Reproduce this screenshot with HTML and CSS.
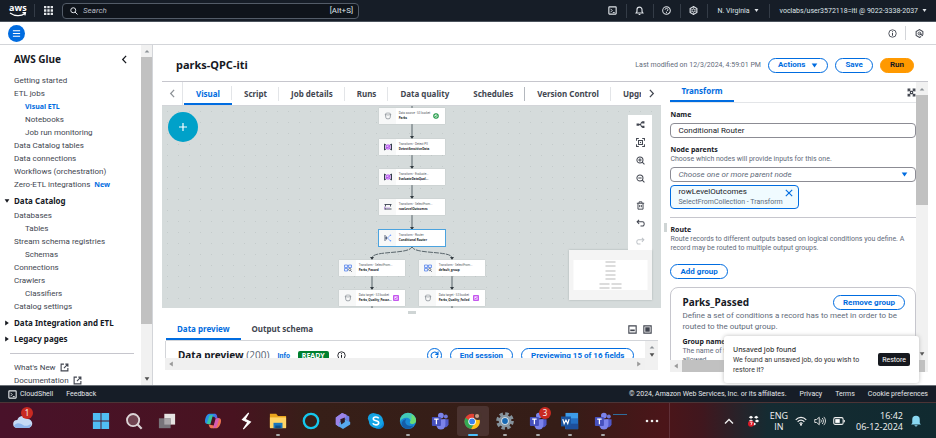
FILE: index.html
```html
<!DOCTYPE html>
<html lang="en">
<head>
<meta charset="utf-8">
<title>parks-QPC-iti - AWS Glue</title>
<link rel="stylesheet" href="styles.css">
</head>
<body>
<svg class="sprite" aria-hidden="true">
  <symbol id="i-teams" viewBox="0 0 20 20"><circle cx="16.5" cy="5" r="2.2" fill="#6f78dc"/><circle cx="11" cy="4" r="3.2" fill="#7b83eb"/><path d="M13 8h6.5v6a4 4 0 0 1-6.500 2z" fill="#5059c9"/><path d="M6 8h10v6.500a5 5 0 0 1-10 0z" fill="#7b83eb"/><rect x="1" y="5.500" width="10" height="10" rx="1" fill="#4650bd"/><path d="M3.500 8h5M6 8v5.500" stroke="#fff" stroke-width="1.400"/></symbol>
  <symbol id="i-ext" viewBox="0 0 16 16"><path d="M7 2H2v12h12V9M9.500 2H14v4.500M14 2 7 9" fill="none" stroke="currentColor" stroke-width="2"/></symbol>
  <symbol id="i-shell" viewBox="0 0 16 16"><rect x="1.500" y="1.500" width="13" height="13" rx="1" fill="none" stroke="currentColor" stroke-width="2"/><path d="m4.500 5 3 3-3 3M8.500 11.500h3.500" fill="none" stroke="currentColor" stroke-width="1.600"/></symbol>
  <symbol id="i-info" viewBox="0 0 16 16"><circle cx="8" cy="8" r="6.600" fill="none" stroke="currentColor" stroke-width="1.600"/><path d="M8 7v5M8 4v1.800" stroke="currentColor" stroke-width="1.800"/></symbol>
  <symbol id="i-left" viewBox="0 0 10 10"><path d="M6.800 1 3 5l3.800 4" fill="none" stroke="currentColor" stroke-width="1.400"/></symbol>
  <symbol id="i-right" viewBox="0 0 10 10"><path d="M3.200 1 7 5 3.200 9" fill="none" stroke="currentColor" stroke-width="1.400"/></symbol>
  <symbol id="i-down" viewBox="0 0 10 10"><path d="M1 2h8L5 8z" fill="currentColor"/></symbol>
  <symbol id="i-up" viewBox="0 0 10 10"><path d="M1 7.500h8l-4-4z" fill="currentColor"/></symbol>
  <symbol id="i-tri" viewBox="0 0 10 10"><path d="M2 1v8l6-4z" fill="currentColor"/></symbol>
  <symbol id="i-search" viewBox="0 0 16 16"><circle cx="6.500" cy="6.500" r="5" fill="none" stroke="currentColor" stroke-width="2"/><path d="m10 10 5 5" stroke="currentColor" stroke-width="2"/></symbol>
  <symbol id="i-bucket" viewBox="0 0 16 16"><ellipse cx="8" cy="4" rx="5.500" ry="2" fill="none" stroke="#687078"/><path d="M2.500 4 4 12.500c1 1.600 7 1.600 8 0L13.500 4" fill="none" stroke="#687078" stroke-width="1.200"/></symbol>
  <symbol id="i-eval" viewBox="0 0 16 16"><path d="M1 2v12M15 2v12M1 2l4 3M15 2l-4 3M1 14l4-3M15 14l-4-3" stroke="#333b4d" stroke-width="2"/><rect x="4" y="4" width="8" height="8" rx="2" fill="#e7b5ff" stroke="#a237e8" stroke-width="1.600"/><path d="m5 8 2 2 4-4" fill="none" stroke="#8118cc" stroke-width="1.400"/></symbol>
  <symbol id="i-collect" viewBox="0 0 16 16"><path d="M1 3h14M3 3v4M13 3v4M2 12h13M2 9v4" fill="none" stroke="#394150" stroke-width="1.800"/><path d="M1 7v6M4 10h8" stroke="#b184df" stroke-width="1.400"/></symbol>
  <symbol id="i-router" viewBox="0 0 16 16"><path d="M2 2v12M2 8h5M5 5v6" fill="none" stroke="#4b5870" stroke-width="1.800"/><path d="M7 8l6-6M7 8l6 6" stroke="#6d9cff" stroke-width="1.600"/><circle cx="13" cy="2.500" r="1.500" fill="#6d9cff"/><circle cx="13" cy="13.500" r="1.500" fill="#6d9cff"/></symbol>
  <symbol id="i-blocks" viewBox="0 0 16 16"><path d="M1 2h6v5H1zM9 2h6v5H9zM1 9h6v5H1z" fill="#e7eeff" stroke="#4778e8" stroke-width="1.400"/><circle cx="11.500" cy="11" r="2.300" fill="none" stroke="#444d60" stroke-width="1.400"/><path d="m13 13 2.500 2.500" stroke="#444d60" stroke-width="1.600"/></symbol>
  <symbol id="i-badge" viewBox="0 0 8 8"><rect x="1" y="1" width="6" height="6" fill="#f8e4ff" stroke="#b52bea" stroke-width="1.400"/><path d="m2.500 4 1.200 1.200 2-2.400" fill="none" stroke="#b52bea"/></symbol>
</svg>

<header class="topbar">
  <a class="aws" href="#" aria-label="AWS home"><span>aws</span><svg viewBox="0 0 18 5"><path d="M1 1c5 3.500 11 3.500 15 .5M13.500.700l3-.2-.6 2.800" fill="none" stroke="#fff" stroke-width="1.200"/></svg></a>
  <button class="apps" aria-label="Services"><svg viewBox="0 0 10 10" fill="#e4e7ea"><path d="M0 0h2.600v2.600H0zM3.700 0h2.600v2.600H3.700zM7.400 0H10v2.600H7.400zM0 3.700h2.600v2.600H0zM3.700 3.700h2.600v2.600H3.700zM7.400 3.700H10v2.600H7.400zM0 7.400h2.600V10H0zM3.700 7.400h2.600V10H3.700zM7.400 7.400H10V10H7.400z"/></svg></button>
  <label class="search"><svg><use href="#i-search"/></svg><input type="search" placeholder="Search" aria-label="Search"><span>[Alt+S]</span></label>
  <nav class="topnav">
    <button aria-label="CloudShell"><svg><use href="#i-shell"/></svg></button>
    <button aria-label="Notifications"><svg viewBox="0 0 16 16"><path d="M2 12.500h12L12.500 10V6.500a4.500 4.500 0 0 0-9 0V10zM6.500 15h3" fill="none" stroke="currentColor" stroke-width="2"/></svg></button>
    <button aria-label="Help"><svg viewBox="0 0 16 16"><circle cx="8" cy="8" r="6.800" fill="none" stroke="currentColor" stroke-width="1.800"/><path d="M5.500 6.500a2.500 2.300 0 1 1 3.300 2.200L8 9.500M8 10.800v1.700" fill="none" stroke="currentColor" stroke-width="1.700"/></svg></button>
    <button aria-label="Settings"><svg viewBox="0 0 16 16"><path d="m8 1 6 3.500v7L8 15l-6-3.500v-7z" fill="none" stroke="currentColor" stroke-width="2"/><circle cx="8" cy="8" r="2.600" fill="none" stroke="currentColor" stroke-width="1.600"/><path d="M8 1v4M8 11v4M2 5l3 1.500M14 5l-3 1.500M2 11l3-1.500M14 11l-3-1.500" stroke="currentColor"/></svg></button>
    <button class="region">N. Virginia <svg><use href="#i-down"/></svg></button>
    <button class="account">voclabs/user3572118=iti @ 9022-3338-2037 <svg><use href="#i-down"/></svg></button>
  </nav>
</header>

<div class="subbar">
  <button class="menu" aria-label="Open navigation"><svg viewBox="0 0 10 10"><path d="M1 2h8M1 5h8M1 8h8" stroke="#fff" stroke-width="1.200"/></svg></button>
  <div class="subtools">
    <button aria-label="Info"><svg><use href="#i-info"/></svg></button>
    <button aria-label="Assistant"><svg viewBox="0 0 16 16"><path d="m14 10V4.500L8 1 2 4.500v7L8 15l3-1.700M8 8l6 4" fill="none" stroke="currentColor" stroke-width="1.800"/><circle cx="8" cy="8" r="2.500" fill="none" stroke="currentColor" stroke-width="1.600"/></svg></button>
  </div>
</div>

<div class="shell">
  <aside class="side">
    <div class="sidebody">
      <div class="sidehead"><h2>AWS Glue</h2><button aria-label="Close navigation"><svg><use href="#i-left"/></svg></button></div>
      <nav class="links">
        <a href="#">Getting started</a>
        <a href="#">ETL jobs</a>
        <a href="#" class="sub current">Visual ETL</a>
        <a href="#" class="sub">Notebooks</a>
        <a href="#" class="sub">Job run monitoring</a>
        <a href="#">Data Catalog tables</a>
        <a href="#">Data connections</a>
        <a href="#">Workflows (orchestration)</a>
        <a href="#">Zero-ETL integrations <b>New</b></a>
        <button class="group"><svg><use href="#i-down"/></svg>Data Catalog</button>
        <a href="#">Databases</a>
        <a href="#" class="sub">Tables</a>
        <a href="#">Stream schema registries</a>
        <a href="#" class="sub">Schemas</a>
        <a href="#">Connections</a>
        <a href="#">Crawlers</a>
        <a href="#" class="sub">Classifiers</a>
        <a href="#">Catalog settings</a>
        <button class="group"><svg><use href="#i-tri"/></svg>Data Integration and ETL</button>
        <button class="group"><svg><use href="#i-tri"/></svg>Legacy pages</button>
      </nav>
      <nav class="links more">
        <a href="#">What's New <svg><use href="#i-ext"/></svg></a>
        <a href="#">Documentation <svg><use href="#i-ext"/></svg></a>
      </nav>
    </div>
    <div class="vbar sidescroll"><svg class="dim"><use href="#i-up"/></svg><i></i><svg><use href="#i-down"/></svg></div>
  </aside>

  <main class="job">
    <div class="jobhead">
      <h1>parks-QPC-iti</h1>
      <p>Last modified on 12/3/2024, 4:59:01 PM</p>
      <button class="btn">Actions <svg><use href="#i-down"/></svg></button>
      <button class="btn">Save</button>
      <button class="btn primary">Run</button>
    </div>
    <div class="split">
      <section class="left">
        <div class="tabs">
          <button class="arrow dim" aria-label="Scroll left"><svg><use href="#i-left"/></svg></button>
          <div class="tablist">
            <button class="tab on">Visual</button><button class="tab">Script</button><button class="tab">Job details</button><button class="tab">Runs</button><button class="tab plain">Data quality</button><button class="tab strong">Schedules</button><button class="tab">Version Control</button><button class="tab">Upgrade analysis</button>
          </div>
          <button class="arrow" aria-label="Scroll right"><svg><use href="#i-right"/></svg></button>
        </div>
        <div class="canvas">
          <button class="add" aria-label="Add nodes"><svg viewBox="0 0 10 10"><path d="M5 1v8M1 5h8" stroke="#fff" stroke-width="1.200"/></svg></button>
          <div class="stage">
            <svg class="edges" viewBox="0 0 146 202">
              <g fill="none" stroke="#59656b"><path d="M73 0v2M73 18v14M73 48v14M73 78v14M73 108v15M33 170v13M113 170v13M33 200v2M113 200v2"/><path d="M73 140c0 9-40 4-40 12M73 140c0 9 40 4 40 12" stroke-dasharray="5 1"/></g>
              <path fill="#343c42" d="m71 30 2 3 2-3zM71 60l2 3 2-3zM71 90l2 3 2-3zM71 121l2 3 2-3zM31 151l2 3 2-3zM111 151l2 3 2-3zM31 181l2 3 2-3zM111 181l2 3 2-3z"/>
            </svg>
            <div class="node n1"><svg><use href="#i-bucket"/></svg><p>Data source - S3 bucket<b>Parks</b></p><svg class="mark" viewBox="0 0 8 8"><circle cx="4" cy="4" r="3" fill="#d9f5e1" stroke="#16923e" stroke-width="1.400"/><path d="m2.500 4 1.200 1.200 2-2.400" fill="none" stroke="#16923e"/></svg></div>
            <div class="node n2"><svg><use href="#i-eval"/></svg><p>Transform - Detect PII<b>DetectSensitiveData</b></p></div>
            <div class="node n3"><svg><use href="#i-eval"/></svg><p>Transform - Evaluate...<b>EvaluateDataQual...</b></p></div>
            <div class="node n4"><svg><use href="#i-collect"/></svg><p>Transform - SelectFrom...<b>rowLevelOutcomes</b></p></div>
            <div class="node n5 picked"><svg><use href="#i-router"/></svg><p>Transform - Router<b>Conditional Router</b></p></div>
            <div class="node n6"><svg><use href="#i-blocks"/></svg><p>Transform - SelectFrom...<b>Parks_Passed</b></p></div>
            <div class="node n7"><svg><use href="#i-blocks"/></svg><p>Transform - SelectFrom...<b>default_group</b></p></div>
            <div class="node n8"><svg><use href="#i-bucket"/></svg><p>Data target - S3 bucket<b>Parks_Quality_Passe...</b></p><svg class="mark"><use href="#i-badge"/></svg></div>
            <div class="node n9"><svg><use href="#i-bucket"/></svg><p>Data target - S3 bucket<b>Parks_Quality_Failed</b></p><svg class="mark"><use href="#i-badge"/></svg></div>
          </div>
          <div class="minimap"><svg viewBox="0 0 74 30"><path fill="#fff" d="M0 0h74v30H0z"/><path d="M32 2h10M32 6h10M32 11h10M32 15h10M32 19h10M26 24h10M38 24h10M26 28h10M38 28h10" stroke="#dcdcdc" stroke-width="2"/></svg></div>
          <div class="tools">
            <button aria-label="Layout"><svg viewBox="0 0 16 16"><path d="M4 8h4l2-4h3M8 8l2 4h3" fill="none" stroke="currentColor" stroke-width="1.800"/><path d="M1 6h5v4H1zM11 2h4v4h-4zM11 10h4v4h-4z" fill="currentColor"/></svg></button>
            <button aria-label="Fit"><svg viewBox="0 0 16 16"><path d="M1 5V1h4M11 1h4v4M15 11v4h-4M5 15H1v-4M4.500 4.500h7v7h-7z" fill="none" stroke="currentColor" stroke-width="1.800"/><path d="M7 7h2v2H7z" fill="currentColor"/></svg></button>
            <button aria-label="Zoom in"><svg viewBox="0 0 16 16"><circle cx="7" cy="7" r="5.400" fill="none" stroke="currentColor" stroke-width="1.800"/><path d="m11 11 4 4M4 7h6M7 4v6" stroke="currentColor" stroke-width="1.800"/></svg></button>
            <button aria-label="Zoom out"><svg viewBox="0 0 16 16"><circle cx="7" cy="7" r="5.400" fill="none" stroke="currentColor" stroke-width="1.800"/><path d="m11 11 4 4M4 7h6" stroke="currentColor" stroke-width="1.800"/></svg></button>
            <button class="apart" aria-label="Delete"><svg viewBox="0 0 16 16"><path d="M1.500 4h13M5.500 4V1.500h5V4M3.500 4v10.500h9V4M6.500 7v4M9.500 7v4" fill="none" stroke="currentColor" stroke-width="1.700"/></svg></button>
            <button aria-label="Undo"><svg viewBox="0 0 16 16"><path d="M5.500 1.500 2 5l3.500 3.500M2 5h9.500a3 3 0 0 1 3 3v1.500a3 3 0 0 1-3 3H8" fill="none" stroke="currentColor" stroke-width="1.800"/></svg></button>
            <button class="off" aria-label="Redo"><svg viewBox="0 0 16 16"><path d="M10.500 1.500 14 5l-3.500 3.500M14 5H4.500a3 3 0 0 0-3 3v1.500a3 3 0 0 0 3 3H8" fill="none" stroke="currentColor" stroke-width="1.800"/></svg></button>
          </div>
        </div>
        <div class="grip"><i></i></div>
        <div class="ptabs">
          <button class="ptab on">Data preview</button><button class="ptab">Output schema</button>
          <div class="views"><button aria-label="Dock bottom"><svg viewBox="0 0 16 16"><path d="M1.500 1.500h13v13h-13z" fill="none" stroke="currentColor" stroke-width="2"/><path d="M4 8h8v3H4z" fill="currentColor"/></svg></button><button aria-label="Full view"><svg viewBox="0 0 16 16"><path d="M1.500 1.500h13v13h-13z" fill="none" stroke="currentColor" stroke-width="2"/><path d="M4 4h8v8H4z" fill="currentColor"/></svg></button></div>
        </div>
        <div class="preview">
          <div class="prow">
            <h3>Data preview <span>(200)</span></h3><a href="#">Info</a><em>READY</em><svg class="inf"><use href="#i-info"/></svg>
            <button class="round" aria-label="Refresh"><svg viewBox="0 0 16 16"><path d="M14 8a6 6 0 1 1-2-4.500L14 5.500M14.300 1v5H9.500" fill="none" stroke="currentColor" stroke-width="1.800"/></svg></button>
            <button class="btn">End session</button><button class="btn">Previewing 15 of 16 fields</button>
          </div>
          <div class="vbar pv"><svg class="dim"><use href="#i-up"/></svg><svg><use href="#i-down"/></svg></div>
          <div class="hbar"><svg class="back"><use href="#i-tri"/></svg><svg><use href="#i-tri"/></svg></div>
        </div>
      </section>

      <section class="panel">
        <div class="panelbody">
          <i class="side-grip"></i>
          <div class="ttabs"><button class="ttab">Transform</button><button class="expand" aria-label="Expand"><svg viewBox="0 0 16 16"><path d="M2 6V2h4M10 2h4v4M14 10v4h-4M6 14H2v-4M2 2l4.500 4.500M14 2 9.500 6.500M14 14 9.500 9.500M2 14l4.500-4.500M6 6h4v4H6z" fill="none" stroke="currentColor" stroke-width="2"/></svg></button></div>
          <form class="form">
            <label for="name">Name</label>
            <input id="name" type="text" value="Conditional Router">
            <label for="parents">Node parents</label>
            <p>Choose which nodes will provide inputs for this one.</p>
            <div class="pick"><select id="parents"><option>Choose one or more parent node</option></select><svg><use href="#i-down"/></svg></div>
            <div class="token"><div><span>rowLevelOutcomes</span><small>SelectFromCollection - Transform</small></div><button type="button" aria-label="Remove rowLevelOutcomes"><svg viewBox="0 0 10 10"><path d="m1 1 8 8M9 1 1 9" stroke="currentColor" stroke-width="1.400"/></svg></button></div>
            <h4>Route</h4>
            <p>Route records to different outputs based on logical conditions you define. A record may be routed to multiple output groups.</p>
            <button type="button" class="btn addgroup">Add group</button>
            <div class="card">
              <div class="cardhead"><h3>Parks_Passed</h3><button type="button" class="btn">Remove group</button></div>
              <p class="lead">Define a set of conditions a record has to meet in order to be routed to the output group.</p>
              <h4>Group name</h4>
              <p>The name of the output group. Spaces and special characters are not allowed.</p>
            </div>
          </form>
        </div>
        <div class="vbar panelv"><svg class="dim"><use href="#i-up"/></svg><i></i><svg><use href="#i-down"/></svg></div>
        <div class="hbar panelh"><svg class="back"><use href="#i-tri"/></svg><i></i></div>
      </section>
    </div>
  </main>
  <div class="toast" role="status"><p><b>Unsaved job found</b>We found an unsaved job, do you wish to restore it?</p><button>Restore</button></div>
</div>

<footer class="foot">
  <button><svg><use href="#i-shell"/></svg>CloudShell</button><a href="#">Feedback</a>
  <span>© 2024, Amazon Web Services, Inc. or its affiliates.</span><a href="#">Privacy</a><a href="#">Terms</a><a href="#">Cookie preferences</a>
</footer>

<div class="taskbar">
  <div class="weather"><svg viewBox="0 0 24 20"><path d="M5 17a4 4 0 0 1 .3-8A5.500 5.500 0 0 1 15.500 8 4.500 4.500 0 0 1 16 17z" fill="#c5daf5"/><path d="M2 15c2-4 6-3 9-1s6 0 8-1c0 3-1.500 4-3 4H5c-1.500 0-2.500-1-3-2z" fill="#8eb6ec"/></svg><b class="count">1</b></div>
  <div class="pins">
    <button aria-label="Start"><svg viewBox="0 0 20 20" fill="#50bdf3"><path d="M1 1h8.500v8.500H1zM10.500 1H19v8.500h-8.500zM1 10.500h8.500V19H1zM10.500 10.500H19V19h-8.500z"/></svg></button>
    <button aria-label="Search"><svg viewBox="0 0 20 20"><circle cx="9" cy="9" r="6.800" fill="#714451" stroke="#ddd5d7" stroke-width="2"/><path d="m14 14 4.500 4.500" stroke="#ddd5d7" stroke-width="2.400"/></svg></button>
    <button aria-label="Task view"><svg viewBox="0 0 20 20"><path d="M7 2h12v12H7z" fill="#e6e3e2"/><path d="M1 7h13v11H1z" fill="#77747a"/><path d="M7 7h7v7H7z" fill="#aaa7aa"/></svg></button>
  </div>
  <div class="pins apps-row">
    <button aria-label="Copilot"><svg viewBox="0 0 20 20"><path d="M6 2h6c2 0 2 2 3 4L9 5 6 13H3c-4 0-1-11 3-11z" fill="#298ee8"/><path d="M3 13 6 4l4-1-3 11z" fill="#38c4a1"/><path d="M14 18H8c-2 0-2-2-3-4l6 1 3-8h3c4 0 1 11-3 11z" fill="#ef7451"/><path d="m17 7-3 10-4 1 3-11z" fill="#d65bb1"/><path d="M12 2c2 0 2 2 3 5h-3z" fill="#5c62df"/></svg></button>
    <button aria-label="Shortcut"><svg viewBox="0 0 20 20"><path d="M13 1 6 8.500l6 3L7 19 15 11 9 8z" fill="#fff" stroke="#fff" stroke-width="1.200"/></svg></button>
    <button class="run" aria-label="File Explorer"><svg viewBox="0 0 20 20"><path d="M1 2h7l2 2.500h9V17H1z" fill="#eaa51d"/><path d="M1 6h18v12H1z" fill="#ffd466"/><path d="M5 12h10v6H5z" fill="#1976bd"/><path d="M7 15h6v3H7z" fill="#0e4e86"/></svg></button>
    <button aria-label="Alexa"><svg viewBox="0 0 20 20"><circle cx="10" cy="10" r="8" fill="none" stroke="#15c7ed" stroke-width="2.600"/></svg></button>
    <button aria-label="Microsoft 365"><svg viewBox="0 0 20 20"><path d="m9 1 8 4v6l-5-3-6 3v6l-4-3V6z" fill="#6e7de5"/><path d="m2 14 10-6 6 3v3l-8 5z" fill="#57a9ed"/><path d="m9 1 5 2-2 5-6 3v5l-4-2V6z" fill="#9b83e9"/><path d="m7 8 5-2v5l-4 3z" fill="#301c25"/></svg></button>
    <button aria-label="Skype"><svg viewBox="0 0 20 20"><circle cx="7" cy="7" r="6" fill="#139fe0"/><circle cx="13" cy="13" r="6" fill="#0b87d8"/><circle cx="10" cy="10" r="8" fill="#14a4e5"/><path d="M13 7c-1-2-6-2-6 .5 0 3 6 1.500 6 4.500 0 3-5.500 3-6.500.5" fill="none" stroke="#fff" stroke-width="1.800"/></svg></button>
    <button class="run" aria-label="Edge"><svg viewBox="0 0 20 20"><circle cx="10" cy="10" r="9" fill="#1989d5"/><path d="M1 10a9 9 0 0 1 18-.5c0 4-6 4.500-7 2 2-3-1-5-4-5s-6 2-7 4z" fill="#43cab6"/><path d="M14 2.500c5 3 7 9 2 10.500-3 .7-4-.5-4-1.500 2-2 2-6 2-9z" fill="#6bdc73"/><path d="M8 8c-3 4 1 9 8 7-4 6-12 4-13-1-.5-3 2-6 5-6z" fill="#155da8"/></svg></button>
    <button aria-label="Teams"><svg><use href="#i-teams"/></svg></button>
    <button class="run active" aria-label="Chrome"><svg viewBox="0 0 20 20"><circle cx="9" cy="10.500" r="8.500" fill="#e34234"/><path d="M1.500 6.500A8.500 8.500 0 0 0 8 19l4-7-3-1z" fill="#34a853"/><path d="M17 7.500A8.500 8.500 0 0 1 8 19l4-7V7.500z" fill="#fbc116"/><circle cx="9" cy="10.500" r="4.200" fill="#fff"/><circle cx="9" cy="10.500" r="3.200" fill="#3b82ed"/><circle cx="15.500" cy="4.500" r="4.500" fill="#4a342e"/><circle cx="14.500" cy="4.500" r="2.300" fill="#c99d85"/></svg></button>
    <button class="run" aria-label="Settings"><svg viewBox="0 0 20 20"><circle cx="10" cy="10" r="8" fill="none" stroke="#85929b" stroke-width="3.600" stroke-dasharray="3.800 2.483"/><circle cx="10" cy="10" r="7" fill="#8997a1"/><circle cx="10" cy="10" r="4.200" fill="#e0e9ef"/><circle cx="10" cy="10" r="3.200" fill="#1769b3"/></svg></button>
    <button class="run" aria-label="Teams, 3 notifications"><svg><use href="#i-teams"/></svg><b class="count">3</b></button>
    <button class="run" aria-label="Word"><svg viewBox="0 0 20 20"><path d="M5 1h14v18H5z" fill="#3d9ce9"/><path d="M5 7h14v12H5z" fill="#246fc3"/><path d="M5 13h14v6H5z" fill="#1d4f9c"/><path d="M0 5h11v11H0z" fill="#1b559f"/><path d="m2 8 1.500 5 2-4 2 4L9 8" fill="none" stroke="#fff" stroke-width="1.300"/></svg></button>
    <button class="run" aria-label="Teams"><svg><use href="#i-teams"/></svg></button>
  </div>
  <i class="dash"></i>
  <button class="dots" aria-label="More"><svg viewBox="0 0 14 4" fill="#eee"><circle cx="2" cy="2" r="1.300"/><circle cx="7" cy="2" r="1.300"/><circle cx="12" cy="2" r="1.300"/></svg></button>
  <div class="tray">
    <button aria-label="Show hidden icons"><svg viewBox="0 0 12 12"><path d="m2 8.500 4-4 4 4" fill="none" stroke="#eee" stroke-width="1.400"/></svg></button>
    <button aria-label="Dropbox"><svg viewBox="0 0 16 16"><path d="m4 1 3 2-3 2-3-2zM11 1l3 2-3 2-3-2zM4 6l3 2-3 2-3-2zM12 6l3 2-3 2-3-2zM8 10l3 2-3 2-3-2z" fill="#fff"/><circle cx="4" cy="11.500" r="4" fill="#dd1927"/><path d="M2.500 9.500h3l-1.500 4" stroke="#fff" fill="none"/></svg></button>
    <p class="lang">ENG<br>IN</p>
    <svg viewBox="0 0 16 16"><path d="M1 6.500c4-4.500 10-4.500 14 0M3.500 9c3-3 6-3 9 0M6 11.500c1.500-1.300 2.500-1.300 4 0" fill="none" stroke="#eee" stroke-width="1.600"/><circle cx="8" cy="13" r="1.400" fill="#eee"/></svg>
    <svg viewBox="0 0 16 16"><path d="M1 6h2.500L7 3v10l-3.500-3H1zM9 6c1 1 1 3 0 4M11 4c2 2.500 2 5.500 0 8M13 2.500c3 3 3 8 0 11" fill="none" stroke="#ddd" stroke-width="1.300"/></svg>
    <svg viewBox="0 0 16 16"><rect x="1" y="3.500" width="12.500" height="9" rx="2" fill="none" stroke="#eee" stroke-width="1.400"/><path d="M3 5.500h6v5H3z" fill="#fff"/><path d="M15 6.500v3" stroke="#eee" stroke-width="1.600"/></svg>
    <p class="clock">16:42<br>06-12-2024</p>
    <svg viewBox="0 0 16 16"><path d="M1.500 12.500 3 10.500V6a5 5 0 0 1 10 0v4.500l1.500 2zM5.500 13.500h5L8 15.500z" fill="#8ad8f2"/></svg>
  </div>
</div>
</body>
</html>
```
FILE: styles.css
```css
* { box-sizing: border-box; }
html, body { height: 100%; }
body { margin: 0; display: flex; flex-direction: column; background: #fff; color: #16191f; font: 7px/10px Roboto, "Noto Sans", sans-serif; overflow: hidden; }
h1, h2, h3, h4, p { margin: 0; }
h1, h2, h3, h4, b, .current, .prow em { font-family: "Noto Sans", sans-serif; }
button, input, select { font: inherit; color: inherit; margin: 0; padding: 0; border: 0; background: none; }
button { display: flex; align-items: center; justify-content: center; white-space: nowrap; }
a { color: inherit; text-decoration: none; }
svg { display: block; flex: none; width: 9px; height: 9px; }
.sprite { position: absolute; width: 0; height: 0; }
.dim { color: #8c9196; }

.topbar { flex: none; height: 22px; display: flex; align-items: center; background: #161d27; border-bottom: 1px solid #4b535d; color: #dfe3e8; }
.aws { width: 35px; padding-left: 9px; border-right: 1px solid #343c47; color: #fff; font-family: "Open Sans", sans-serif; font-size: 9px; font-weight: bold; line-height: 8px; }
.aws svg { width: 18px; height: 5px; }
.apps { width: 27px; }
.search { display: flex; align-items: center; gap: 5px; width: 297px; height: 16px; padding: 0 5px 0 7px; border: 1px solid #535c68; border-radius: 4px; background: #0f141b; font-size: 8px; }
.search svg { width: 8px; height: 8px; }
.search input { flex: 1; min-width: 0; outline: 0; }
.search input::placeholder { color: #b4bac2; font-style: italic; opacity: 1; }
.topnav { margin-left: auto; display: flex; align-items: center; padding-right: 3px; }
.topnav button { width: 27px; height: 14px; border-right: 1px solid #343c47; gap: 4px; }
.topnav .region, .topnav .account { width: auto; padding: 0 10px; }
.topnav .account { border: 0; padding-right: 6px; }
.topnav .region svg, .topnav .account svg { width: 5px; height: 5px; }

.subbar { flex: none; height: 23px; display: flex; align-items: center; justify-content: space-between; padding: 0 4px 0 8px; border-bottom: 1px solid #d3d5d9; }
.menu { width: 17px; height: 17px; border-radius: 50%; background: #006ce0; }
.subtools { display: flex; color: #424650; }
.subtools button { width: 26px; height: 14px; }
.subtools button:first-child { border-right: 1px solid #d3d5d9; }

.shell { flex: 1; min-height: 0; display: flex; position: relative; }
.side { flex: none; width: 153px; display: flex; border-right: 1px solid #d3d5d9; }
.sidebody { flex: 1; min-width: 0; overflow: hidden; }
.sidehead { display: flex; justify-content: space-between; align-items: center; height: 28px; padding: 0 12px 0 14px; margin-bottom: 1px; }
.sidehead h2 { font-size: 10px; }
.links { display: flex; flex-direction: column; color: #424650; font-size: 8px; }
.links a { padding-left: 14px; line-height: 13px; white-space: nowrap; display: flex; align-items: center; gap: 4px; }
.links .sub { padding-left: 25px; }
.links .current { color: #006ce0; font-size: 7px; font-weight: bold; }
.links b { color: #006ce0; font-size: 7px; }
.links .group { justify-content: flex-start; height: 16px; padding-left: 4px; gap: 4px; font-family: "Noto Sans", sans-serif; font-weight: bold; color: #16191f; }
.links a + .group { margin-top: 2px; }
.links .group svg { width: 6px; height: 6px; }
.more { margin: 6px 7px 0 10px; padding-top: 7px; border-top: 1px solid #c6c6cd; }
.more a { padding-left: 4px; }

.vbar { display: flex; flex-direction: column; align-items: center; width: 11px; background: #f1f1f1; color: #505050; padding: 3px 0; gap: 3px; }
.vbar i { width: 100%; background: #c1c1c1; }
.vbar svg, .hbar svg { width: 6px; height: 6px; }
.vbar svg:last-child { margin-top: auto; }
.vbar .dim { color: #8c9196; }
.hbar { display: flex; align-items: center; height: 12px; padding: 0 3px; gap: 3px; background: #f0f0f0; color: #999; }
.hbar svg:last-child { margin-left: auto; }
.hbar i { flex: 1; height: 100%; background: #c1c1c1; }
.back { transform: scaleX(-1); }
.sidescroll i { flex: 0 0 80%; }

.job { flex: 1; min-width: 0; display: flex; flex-direction: column; padding: 0 8px 13px 9px; }
.jobhead { flex: none; height: 37px; display: flex; align-items: center; gap: 7px; padding: 4px 14px 0; border-bottom: 1px solid #c6c6cd; }
.jobhead h1 { font-size: 11px; line-height: 14px; flex: 1; }
.jobhead p { color: #5f6b7a; }
.btn { height: 15px; padding: 0 9px; border: 1px solid #006ce0; border-radius: 8px; color: #006ce0; font-size: 8px; font-weight: bold; gap: 6px; }
.btn svg { width: 7px; height: 7px; }
.primary { background: #ff9900; border-color: #ff9900; color: #16191f; }
.split { flex: 1; min-height: 0; display: flex; }
.left { flex: 1; min-width: 0; display: flex; flex-direction: column; padding-bottom: 2px; }
.tabs { flex: none; display: flex; height: 24px; border-bottom: 1px solid #d3d5d9; }
.arrow { flex: none; width: 20px; color: #424650; }
.arrow.dim { color: #8c9196; }
.tablist { flex: 1; min-width: 0; display: flex; align-items: center; overflow: hidden; border-left: 1px solid #e3e5e8; padding-left: 1px; }
.tab, .ptab, .ttab { font-family: "Noto Sans", sans-serif; font-size: 8px; font-weight: bold; color: #424650; }
.tab { flex: none; height: 23px; padding: 0 12px; background: linear-gradient(#e3e5e8, #e3e5e8) right / 1px 14px no-repeat; }
.plain { background: none; }
.strong { background-image: linear-gradient(#b4b8be, #b4b8be); }
.tab.on, .ptab.on, .ttab { color: #006ce0; border-bottom: 2px solid #006ce0; }
.tab.on, .ptab.on { padding-top: 2px; }

.canvas { flex: 1; min-height: 0; position: relative; overflow: hidden; background: radial-gradient(circle, #c4cbcb 0 0.500px, transparent 1px) 0 0 / 11px 11px #d5dbdb; }
.add { position: absolute; left: 6px; top: 6px; width: 30px; height: 30px; border-radius: 50%; background: #00a1c9; }
.add svg { width: 10px; height: 10px; }
.stage { position: relative; width: 146px; height: 202px; margin: 0 auto; }
.edges { position: absolute; width: 146px; height: 202px; }
.node { position: absolute; display: flex; align-items: center; width: 66px; height: 16px; background: linear-gradient(90deg, #f7f8f8 17px, #fff 17px); box-shadow: 0 0 1px #aab3b3; color: #545b64; font-size: 3px; line-height: 5px; white-space: nowrap; }
.node > svg:first-child { margin: 0 5px; width: 8px; height: 8px; }
.node p { flex: 1; min-width: 0; margin-left: 2px; }
.node b { display: block; color: #16191f; }
.node .mark { width: 6px; height: 6px; margin-right: 6px; }
.picked { outline: 1px solid #4ba3df; }
.n1 { left: 40px; top: 2px; }
.n2 { left: 40px; top: 33px; }
.n3 { left: 40px; top: 63px; }
.n4 { left: 40px; top: 93px; }
.n5 { left: 40px; top: 124px; }
.n6 { left: 0; top: 154px; }
.n7 { left: 80px; top: 154px; }
.n8 { left: 0; top: 184px; }
.n9 { left: 80px; top: 184px; }
.tools { position: absolute; right: 9px; top: 9px; width: 24px; display: flex; flex-direction: column; background: #fff; color: #424650; }
.tools button { height: 18px; }
.tools .apart { margin-top: 9px; }
.tools .off { color: #bfc3c8; }
.minimap { position: absolute; right: 9px; bottom: 8px; width: 83px; height: 50px; padding: 10px 4px; background: #f4f4f4; box-shadow: 0 0 2px #a8b0b0; }
.minimap svg { width: 100%; height: 30px; }

.grip { flex: none; height: 10px; display: flex; justify-content: center; padding-top: 3px; }
.grip i { width: 8px; height: 3px; background: #cfd5d5; }
.ptabs { flex: none; display: flex; height: 23px; margin: 0 3px 0 4px; border-bottom: 1px solid #d3d5d9; }
.ptab { padding: 0 11px; }
.views { margin-left: auto; display: flex; gap: 6px; padding-right: 6px; color: #424650; }
.preview { flex: none; display: grid; grid-template: 17px 12px / 1fr 13px; margin: 0 3px; }
.prow { display: flex; align-items: flex-start; gap: 8px; overflow: hidden; padding: 7px 11px 0 12px; border-left: 1px solid #d3d5d9; min-width: 0; }
.prow h3 { font-size: 10px; line-height: 15px; white-space: nowrap; }
.prow h3 span { font-weight: normal; color: #5f6b7a; }
.prow > a { color: #006ce0; font-weight: bold; line-height: 17px; }
.prow em { margin-top: 3px; padding: 0 4px; height: 12px; border-radius: 2px; background: #00802f; color: #fff; font-style: normal; font-weight: bold; }
.inf { margin-top: 3px; margin-right: auto; }
.round { width: 15px; height: 15px; border: 1px solid #006ce0; border-radius: 50%; color: #006ce0; }
.pv { grid-row: 1 / 3; grid-column: 2; width: 13px; gap: 2px; padding-bottom: 15px; }

.panel { flex: none; width: 34.800%; display: grid; grid-template: 1fr 12px / 1fr 12px; }
.panelbody { position: relative; overflow: hidden; min-width: 0; min-height: 0; padding-left: 9px; }
.side-grip { position: absolute; left: 3px; top: 141px; width: 3px; height: 9px; background: #cfd5d5; }
.ttabs { display: flex; justify-content: space-between; height: 21px; border-bottom: 1px solid #e3e5e8; }
.ttab { padding: 0 11px; }
.expand { color: #424650; width: 10px; }
.form { padding-top: 7px; display: flex; flex-direction: column; color: #5f6b7a; line-height: 9px; }
.form label, .form h4 { font-family: "Noto Sans", sans-serif; font-size: 7px; font-weight: bold; line-height: 10px; color: #16191f; }
.form input { height: 15px; margin: 3px 0 7px; padding: 0 7px; border: 1px solid #8c8c94; border-radius: 4px; color: #16191f; font-size: 8px; }
.pick { display: grid; align-items: center; margin: 3px 0; }
.pick > * { grid-area: 1 / 1; }
.pick select { appearance: none; width: 100%; height: 15px; padding: 0 7px; border: 1px solid #8c8c94; border-radius: 4px; font-size: 8px; font-style: italic; color: #5f6b7a; background: #fff; }
.pick svg { justify-self: end; margin-right: 8px; width: 7px; height: 7px; color: #006ce0; pointer-events: none; }
.token { align-self: flex-start; display: flex; justify-content: space-between; align-items: flex-start; width: 129px; height: 24px; padding: 1px 5px 0 7px; border: 1px solid #006ce0; border-radius: 4px; background: #f0fbff; color: #16191f; }
.token span, .token small { display: block; font-size: 8px; line-height: 10px; white-space: nowrap; }
.token small { color: #5f6b7a; font-size: 7px; }
.token button { color: #006ce0; height: 11px; }
.token svg { width: 8px; height: 8px; }
.token + h4 { margin-top: 8px; padding-top: 7px; border-top: 1px solid #c6c6cd; }
.addgroup { align-self: flex-start; margin: 11px 0 8px; }
.card { border: 1px solid #c6c6cd; border-radius: 8px; padding: 7px 10px 0 11px; height: 110px; }
.cardhead { display: flex; justify-content: space-between; align-items: center; }
.cardhead h3 { font-size: 10px; color: #16191f; }
.card .lead { font-size: 8px; line-height: 11px; margin-bottom: 5px; }
.panelv { width: 12px; padding-top: 4px; }
.panelv i { flex: 0 0 110px; }
.panelh { grid-column: 1 / 3; margin-left: 9px; }

.toast { position: absolute; right: 17px; bottom: 2px; width: 195px; min-height: 47px; display: flex; align-items: center; justify-content: space-between; padding: 0 9px; background: #fff; border-radius: 3px; box-shadow: 0 0 4px #bbb; line-height: 10px; color: #333; }
.toast p { width: 138px; }
.toast b { display: block; font-weight: 500; }
.toast button { height: 13px; padding: 0 4px; border-radius: 2px; background: #16191f; color: #fff; }

.foot { flex: none; height: 17px; display: flex; align-items: center; gap: 13px; padding: 0 8px; background: #161d27; border-top: 1px solid #6b7178; color: #e4e7ea; white-space: nowrap; }
.foot button { gap: 3px; }
.foot span { margin-left: auto; }

.taskbar { flex: none; height: 36px; display: flex; align-items: center; background: linear-gradient(90deg, #49122a 0, #481320 25%, #371f18 33%, #351d17 60%, #4b1519 71%, #40171e 75%, #152b32 82%, #102a30 100%); border-top: 1px solid #4c3436; color: #f4f4f4; font-family: "Open Sans", sans-serif; font-size: 9px; line-height: 11px; }
.weather { position: relative; flex: none; width: 84px; height: 30px; padding: 5px 0 0 12px; }
.weather svg { width: 24px; height: 20px; }
.weather .count { left: 21px; }
.pins { flex: none; display: grid; grid-template-columns: repeat(3, 33px); }
.pins button { height: 30px; position: relative; }
.pins svg { width: 18px; height: 18px; }
.apps-row { grid-template-columns: repeat(13, 1fr); width: 422px; margin-left: 14px; }
.run::after { content: ""; position: absolute; bottom: 0; width: 4px; height: 2px; border-radius: 1px; background: #aaa; }
.pins .active { background: #4b3330; border-radius: 3px; }
.active::after { width: 10px; background: #4cc2ff; }
.count { position: absolute; right: 3px; top: 1px; width: 12px; height: 12px; border-radius: 50%; background: #c92a22; font-size: 8px; font-weight: normal; line-height: 12px; text-align: center; }
.dash { position: absolute; left: 613px; width: 14px; height: 1px; bottom: 23px; background: #2f6d9b; }
.dots { flex: none; margin-left: 24px; width: 18px; }
.dots svg { width: 14px; height: 4px; }
.tray { flex: 1; display: flex; align-items: center; justify-content: flex-end; gap: 7px; padding-right: 14px; margin-left: 8px; height: 100%; border-left: 1px solid #603038; }
.tray svg { width: 12px; height: 12px; }
.tray button { width: 18px; }
.tray p { text-align: center; }
.tray .clock { text-align: right; margin-left: 4px; }
```
